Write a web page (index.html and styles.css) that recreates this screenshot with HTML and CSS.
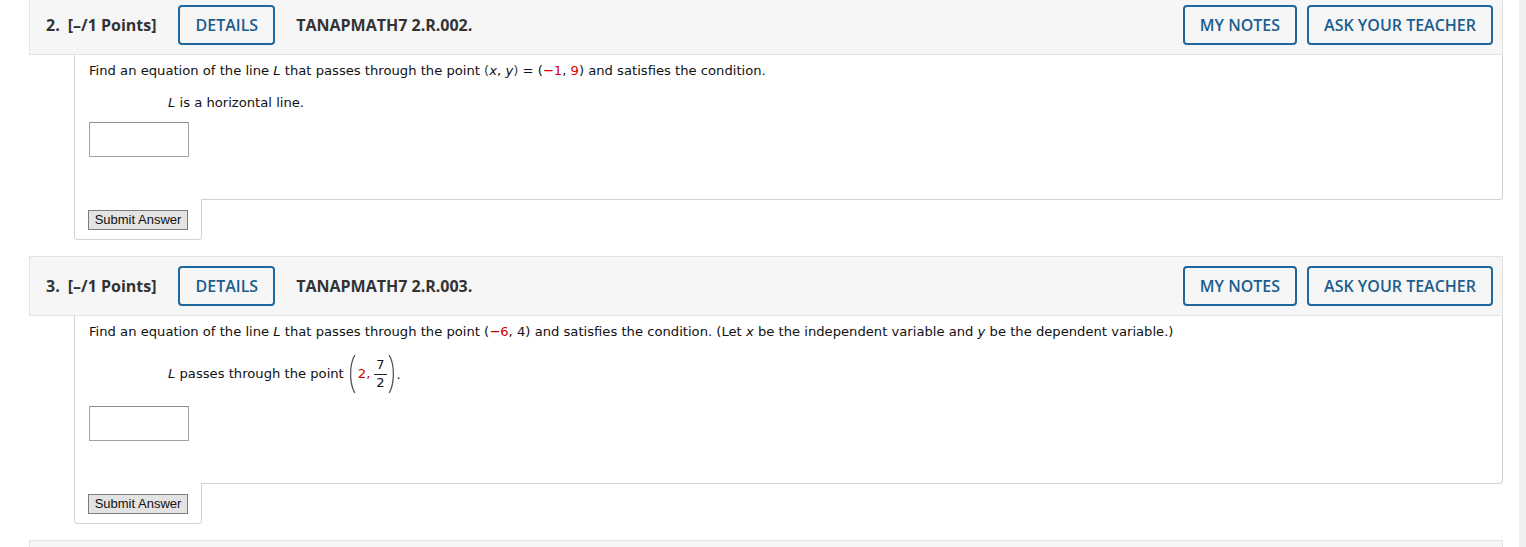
FILE: index.html
```html
<!DOCTYPE html>
<html lang="en">
<head>
<meta charset="utf-8">
<title>Questions</title>
<link rel="stylesheet" href="styles.css">
</head>
<body>
<div class="layout">
  <main class="page">
    <section class="question">
      <header class="q-head">
        <span class="q-num">2.</span>
        <span class="q-points">[–/1 Points]</span>
        <button class="btn btn-details">DETAILS</button>
        <span class="q-code">TANAPMATH7 2.R.002.</span>
        <button class="btn btn-notes">MY NOTES</button>
        <button class="btn btn-ask">ASK YOUR TEACHER</button>
      </header>
      <div class="q-body">
        <p class="prompt">Find an equation of the line <i class="var">L</i> that passes through the point <span class="gray">(</span><i class="var">x</i>, <i class="var">y</i><span class="gray">)</span> = (<span class="red">−1</span>, <span class="red">9</span>) and satisfies the condition.</p>
        <p class="cond"><i class="var">L</i> is a horizontal line.</p>
        <input class="answer" type="text" aria-label="answer">
      </div>
      <div class="q-submit"><button class="submit">Submit Answer</button></div>
    </section>

    <section class="question">
      <header class="q-head">
        <span class="q-num">3.</span>
        <span class="q-points">[–/1 Points]</span>
        <button class="btn btn-details">DETAILS</button>
        <span class="q-code">TANAPMATH7 2.R.003.</span>
        <button class="btn btn-notes">MY NOTES</button>
        <button class="btn btn-ask">ASK YOUR TEACHER</button>
      </header>
      <div class="q-body">
        <p class="prompt">Find an equation of the line <i class="var">L</i> that passes through the point (<span class="red">−6</span>, 4) and satisfies the condition. (Let <i class="var">x</i> be the independent variable and <i class="var">y</i> be the dependent variable.)</p>
        <p class="cond cond-math"><span><i class="var">L</i> passes through the point</span>
          <svg class="paren" viewBox="0 0 8 40" width="8" height="40" aria-hidden="true"><path d="M6.8 1 C1.2 11 1.2 29 6.8 39" fill="none" stroke="#555" stroke-width="1.3"/></svg><span class="red pt">2,</span><span class="frac"><span class="num">7</span><span class="den">2</span></span><svg class="paren" viewBox="0 0 8 40" width="8" height="40" aria-hidden="true"><path d="M1.2 1 C6.8 11 6.8 29 1.2 39" fill="none" stroke="#555" stroke-width="1.3"/></svg><span class="dot">.</span></p>
        <input class="answer" type="text" aria-label="answer">
      </div>
      <div class="q-submit"><button class="submit">Submit Answer</button></div>
    </section>

    <section class="question">
      <header class="q-head q-head-next"></header>
    </section>
  </main>
  <div class="rail"></div>
</div>
</body>
</html>
```
FILE: styles.css
```css
* { box-sizing: border-box; }
html, body { margin: 0; padding: 0; overflow: hidden; background: #fff; }
body { font-family: "Open Sans", "Liberation Sans", sans-serif; color: #333; }

.layout { display: flex; height: 547px; overflow: hidden; }
.page { flex: 1; padding: 0 16px 0 29px; margin-top: -5px; }
.rail { width: 7px; background: #efefef; flex: none; }

.question { margin-bottom: 16px; }

.q-head {
  display: flex;
  align-items: center;
  height: 60px;
  padding: 0 9px 0 16px;
  background: #f6f6f6;
  border: 1px solid #e3e3e3;
  font-size: 16px;
}
.q-num { font-weight: 700; margin-right: 8px; color: #333; }
.q-points { font-weight: 700; color: #333; }
.q-code { font-weight: 700; color: #333; margin-left: 21px; }

.btn {
  height: 40px;
  padding: 0 15px;
  border: 2px solid #1f679c;
  border-radius: 4px;
  background: transparent;
  color: #1c5d8e;
  font-family: "Open Sans", "Liberation Sans", sans-serif;
  font-size: 16px;
  font-weight: 600;
  cursor: pointer;
}
.btn-details { margin-left: 22px; }
.btn-notes { margin-left: auto; }
.btn-ask { margin-left: 10px; }

.q-body {
  margin-left: 45px;
  border: 1px solid #d2d2d2;
  border-top: 0;
  border-bottom-right-radius: 4px;
  padding: 8px 14px 42px;
  font-family: "DejaVu Sans", Verdana, sans-serif;
  font-size: 13.15px;
  line-height: 16px;
  color: #111;
}
.prompt { margin: 0; }
.cond { margin: 16px 0 0 79px; }
.cond-math { display: flex; align-items: center; margin-top: 14px; height: 40px; }
.cond-math > span:first-child { margin-right: 4px; }
.var { font-style: italic; }
.red { color: #d60000; }
.gray { color: #444; }
.pt { margin-left: 2px; margin-right: 2px; }

.paren { display: block; flex: none; }
.frac {
  display: inline-flex;
  flex-direction: column;
  align-items: center;
  font-size: 13px;
  line-height: 14px;
  margin: 0 1px 0 2px;
}
.num { border-bottom: 1px solid #222; padding: 0 2px 2px; }
.den { padding-top: 1px; }
.dot { margin-left: 1px; align-self: center; padding-top: 2px; }

.answer {
  display: block;
  margin-top: 12px;
  width: 100px;
  height: 35px;
  border: 1px solid #a3a3a3;
  border-top-color: #8c8c8c;
  background: #fff;
}
.cond + .answer { margin-top: 11px; }
.cond-math + .answer { margin-top: 12px; }

.q-submit {
  margin-left: 45px;
  margin-top: -1px;
  width: 128px;
  height: 41px;
  background: #fff;
  border: 1px solid #d2d2d2;
  border-top: 0;
  border-radius: 0 0 4px 4px;
  padding: 11px 0 0 13px;
}
.submit {
  display: block;
  width: 100px;
  height: 20px;
  padding: 0;
  border: 1px solid #7d7d7d;
  background: #e3e3e3;
  color: #111;
  font-family: "Liberation Sans", Arial, sans-serif;
  font-size: 13px;
  line-height: 18px;
}

.q-head-next { height: 60px; }
```
